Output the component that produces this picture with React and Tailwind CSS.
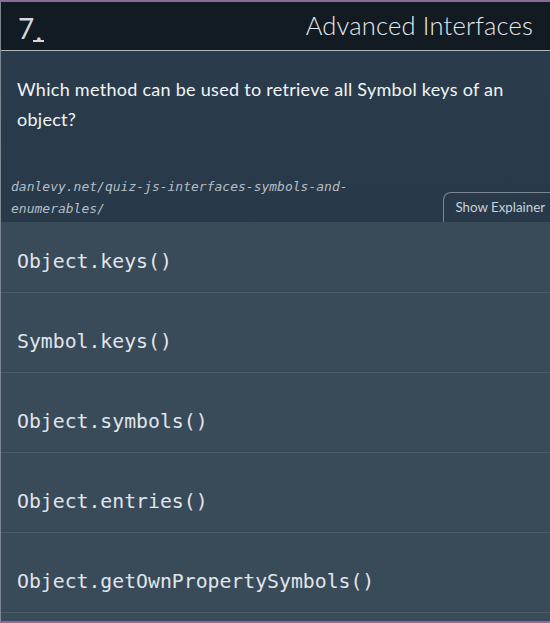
export default function App() {
  const options = [
    "Object.keys()",
    "Symbol.keys()",
    "Object.symbols()",
    "Object.entries()",
    "Object.getOwnPropertySymbols()",
  ];
  return (
    <div className="w-[550px] h-[623px] overflow-hidden bg-[#394a59] flex flex-col border-t-2 border-b-2 border-[#8a6c98]">
      <div className="flex-1 flex flex-col border-l border-[#7d8792]">
        <header className="h-[49px] shrink-0 bg-[#121a22] border-b border-[#aeb6be] flex items-center justify-between pl-[17px] pr-[17px]">
          <div className="text-[28px] leading-none text-[#d4d8dc] font-['Lato',sans-serif] font-normal flex items-end mt-[4px]">
            <span>7</span>
            <span className="border-b-2 border-[#d4d8dc] w-[11px] -ml-[1px] text-center leading-[20px]">.</span>
          </div>
          <div className="text-[25.5px] font-light text-[#e4e8ec] font-['Lato',sans-serif] tracking-[0.2px] -mt-[1px]">
            Advanced Interfaces
          </div>
        </header>
        <section className="h-[171px] shrink-0 bg-gradient-to-b from-[#2a3c4c] to-[#283a49] flex flex-col">
          <p className="px-[16px] pt-[23px] text-[18px] tracking-[0.28px] leading-[30px] text-[#f2f4f6] font-['Lato',sans-serif]">
            Which method can be used to retrieve all Symbol keys of an object?
          </p>
          <div className="mt-auto flex items-end justify-between">
            <div className="pl-[10px] pb-[2px] text-[13px] leading-[22px] italic text-[#b4bec8] font-['DejaVu_Sans_Mono',monospace]">
              danlevy.net/quiz-js-interfaces-symbols-and-
              <br />
              enumerables/
            </div>
            <button className="h-[30px] pl-[11px] pr-[5px] border-l border-t border-[#7a8693] rounded-tl-[8px] text-[13.3px] text-[#c9d1d9] font-['Lato',sans-serif]">
              Show Explainer
            </button>
          </div>
        </section>
        <div className="flex flex-col">
          {options.map((o, i) => (
            <div
              key={o}
              className={`${i === 0 ? "h-[71px]" : "h-[80px]"} border-b border-[#4a5b6b] flex items-end pb-[16px] pl-[16px] text-[19.8px] leading-[28px] text-[#e0e5ea] font-['DejaVu_Sans_Mono',monospace]`}
            >
              {o}
            </div>
          ))}
        </div>
      </div>
    </div>
  );
}
